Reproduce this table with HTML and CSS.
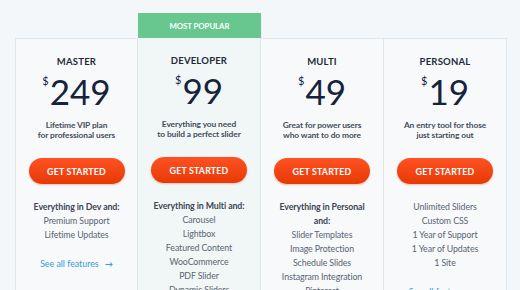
FILE: index.html
```html
<!DOCTYPE html>
<html>
<head>
<meta charset="utf-8">
<link rel="stylesheet" href="styles.css">
</head>
<body>
<div class="pricing">
  <div class="plan">
    <div class="card">
      <h3 class="name">MASTER</h3>
      <div class="price"><span class="cur">$</span>249</div>
      <p class="desc">Lifetime VIP plan<br>for professional users</p>
      <a class="btn">GET STARTED</a>
      <ul class="features">
        <li class="lead">Everything in Dev and:</li>
        <li>Premium Support</li>
        <li>Lifetime Updates</li>
      </ul>
      <a class="more">See all features <span class="arrow">&#8594;</span></a>
    </div>
  </div>
  <div class="plan popular">
    <div class="badge">MOST POPULAR</div>
    <div class="card">
      <h3 class="name">DEVELOPER</h3>
      <div class="price"><span class="cur">$</span>99</div>
      <p class="desc">Everything you need<br>to build a perfect slider</p>
      <a class="btn">GET STARTED</a>
      <ul class="features">
        <li class="lead">Everything in Multi and:</li>
        <li>Carousel</li>
        <li>Lightbox</li>
        <li>Featured Content</li>
        <li>WooCommerce</li>
        <li>PDF Slider</li>
        <li>Dynamic Sliders</li>
      </ul>
    </div>
  </div>
  <div class="plan">
    <div class="card">
      <h3 class="name">MULTI</h3>
      <div class="price"><span class="cur">$</span>49</div>
      <p class="desc">Great for power users<br>who want to do more</p>
      <a class="btn">GET STARTED</a>
      <ul class="features">
        <li class="lead">Everything in Personal<br>and:</li>
        <li>Slider Templates</li>
        <li>Image Protection</li>
        <li>Schedule Slides</li>
        <li>Instagram Integration</li>
        <li>Pinterest</li>
      </ul>
    </div>
  </div>
  <div class="plan">
    <div class="card">
      <h3 class="name">PERSONAL</h3>
      <div class="price"><span class="cur">$</span>19</div>
      <p class="desc">An entry tool for those<br>just starting out</p>
      <a class="btn">GET STARTED</a>
      <ul class="features">
        <li>Unlimited Sliders</li>
        <li>Custom CSS</li>
        <li>1 Year of Support</li>
        <li>1 Year of Updates</li>
        <li>1 Site</li>
      </ul>
      <a class="more">See all features <span class="arrow">&#8594;</span></a>
    </div>
  </div>
</div>
</body>
</html>
```
FILE: styles.css
```css
html, body {
  margin: 0;
  padding: 0;
  height: 290px;
  overflow: hidden;
  background: #f4f7fa;
  font-family: "Lato", "Noto Sans", sans-serif;
}
.pricing {
  display: flex;
  padding: 13px 12px 0 15px;
}
.plan {
  width: 123px;
  display: flex;
  flex-direction: column;
  padding-top: 25px;
}
.plan + .plan .card {
  border-left: none;
}
.popular {
  padding-top: 0;
}
.badge {
  height: 25px;
  background: #68c78e;
  color: #fff;
  font-size: 7.8px;
  font-weight: 700;
  letter-spacing: -0.05px;
  display: flex;
  align-items: center;
  justify-content: center;
}
.card {
  background: #f7f9fb;
  border: 1px solid #dfe6ec;
  border-bottom: none;
  height: 300px;
  display: flex;
  flex-direction: column;
  align-items: center;
  text-align: center;
}
.popular .card {
  background: #f1f7f6;
  border-top: none;
}
.name {
  margin: 17px 0 0;
  font-size: 9.5px;
  font-weight: 700;
  letter-spacing: 0.2px;
  color: #1f2b3a;
  line-height: 12px;
}
.price {
  margin-top: 5px;
  font-size: 35px;
  line-height: 36px;
  font-weight: 400;
  color: #16233a;
  display: flex;
  align-items: flex-start;
}
.cur {
  font-size: 11px;
  line-height: 12px;
  margin-right: 1px;
  margin-top: 2px;
}
.desc {
  margin: 11px 0 0;
  font-size: 8.4px;
  letter-spacing: -0.1px;
  line-height: 10px;
  font-weight: 700;
  color: #444d5a;
}
.btn {
  margin-top: 18px;
  width: 96px;
  height: 26px;
  border-radius: 13px;
  background: linear-gradient(#ff5122, #e63a06);
  box-shadow: 0 1px 2px rgba(200, 60, 20, 0.3);
  color: #fff;
  font-size: 8.8px;
  font-weight: 700;
  letter-spacing: 0.2px;
  display: flex;
  align-items: center;
  justify-content: center;
}
.features {
  list-style: none;
  margin: 16px 0 0;
  padding: 0;
  font-size: 8.8px;
  letter-spacing: -0.1px;
  line-height: 14px;
  color: #5a6472;
}
.features .lead {
  font-weight: 700;
  color: #3d4654;
}
.more {
  margin-top: 15px;
  font-size: 8.8px;
  line-height: 14px;
  color: #3a9ad9;
}
.arrow {
  margin-left: 4px;
  font-weight: 700;
  font-size: 8px;
}
```
